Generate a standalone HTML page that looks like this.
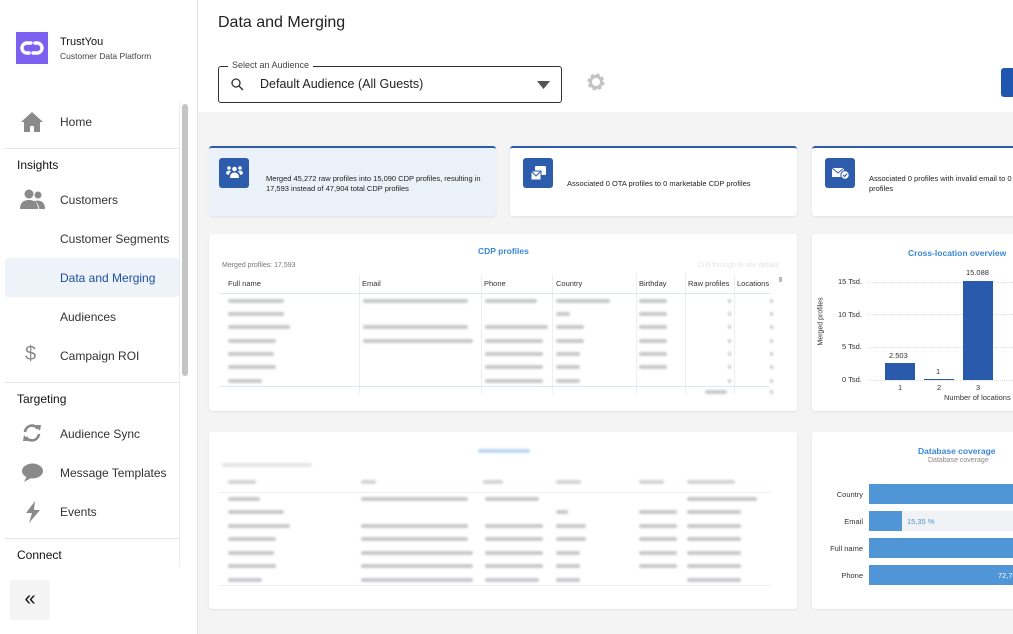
<!DOCTYPE html>
<html><head><meta charset="utf-8"><style>
*{box-sizing:border-box;margin:0;padding:0}
body{width:1013px;height:634px;overflow:hidden;font-family:"Liberation Sans",Arial,sans-serif;background:#f4f4f4;position:relative;color:#222}
.abs{position:absolute}
#side{left:0;top:0;width:198px;height:634px;background:#fff;border-right:1px solid #e4e4e4}
.nav{position:absolute;left:60px;font-size:12px;color:#333}
.sec{position:absolute;left:17px;font-size:12px;color:#111}
.hr{position:absolute;left:5px;width:174px;height:1px;background:#e6e6e6}
.card{position:absolute;background:#fff;border-radius:3px;box-shadow:0 1px 2px rgba(0,0,0,.08)}
.kpi{border-top:2px solid #2c5cab}
.ic{position:absolute;left:10px;top:10px;width:30px;height:30px;background:#2c5cab;border-radius:3px}
.kt{position:absolute;font-size:7.5px;color:#222;line-height:10px}
.b{position:absolute;height:4px;background:#c9c9c9;filter:blur(1px);border-radius:2px}
.th{position:absolute;font-size:7.5px;color:#333}
.vl{position:absolute;width:1px;background:#eee}
.ax{position:absolute;font-size:7.5px;color:#333}
</style></head><body>
<div class="abs" style="left:198px;top:0;width:815px;height:112px;background:#fff"></div>
<div id="side" class="abs">
 <div class="abs" style="left:16px;top:32px;width:32px;height:32px;background:#7b61f0"></div>
 <svg class="abs" style="left:16px;top:32px" width="32" height="32" viewBox="0 0 32 32"><path d="M15 11 H11 a5 5 0 0 0 0 10 H13 M17 21 H21 a5 5 0 0 0 0 -10 H19" fill="none" stroke="#fff" stroke-width="3.4" stroke-linecap="round"/><path d="M12 16 H20" stroke="#fff" stroke-width="0" /></svg>
 <div class="abs" style="left:60px;top:36px;font-size:11px;color:#111">TrustYou</div>
 <div class="abs" style="left:60px;top:51px;font-size:8.5px;color:#444">Customer Data Platform</div>
 <svg class="abs" style="left:21px;top:111px" width="22" height="21" viewBox="0 0 22 21"><path d="M11 1 L22 11 H19 V21 H13 V15 H9 V21 H3 V11 H0 Z" fill="#8a8a8a"/></svg>
 <div class="nav" style="top:115px">Home</div>
 <div class="hr" style="top:148px"></div>
 <div class="sec" style="top:158px">Insights</div>
 <svg class="abs" style="left:20px;top:189px" width="26" height="20" viewBox="0 0 26 20"><circle cx="9" cy="5" r="4.5" fill="#8a8a8a"/><circle cx="18" cy="6" r="3.5" fill="#8a8a8a"/><path d="M0 20 Q0 11 9 11 Q18 11 18 20Z M14 12 Q25 10 25 20 H19 Q19 14 14 12Z" fill="#8a8a8a"/></svg>
 <div class="nav" style="top:193px">Customers</div>
 <div class="nav" style="top:232px">Customer Segments</div>
 <div class="abs" style="left:5px;top:258px;width:174px;height:39px;background:#eef3fa;border-radius:3px"></div>
 <div class="nav" style="top:271px;color:#1f4fa0">Data and Merging</div>
 <div class="nav" style="top:310px">Audiences</div>
 <div class="abs" style="left:25px;top:343px;font-size:20px;color:#8a8a8a">$</div>
 <div class="nav" style="top:349px">Campaign ROI</div>
 <div class="hr" style="top:382px"></div>
 <div class="sec" style="top:392px">Targeting</div>
 <svg class="abs" style="left:22px;top:423px" width="20" height="20" viewBox="0 0 20 20"><path d="M3 9 A7 7 0 0 1 16 6 M17 11 A7 7 0 0 1 4 14" fill="none" stroke="#8a8a8a" stroke-width="2.6"/><path d="M13 2 L19 2 L18 8Z M7 18 L1 18 L2 12Z" fill="#8a8a8a"/></svg>
 <div class="nav" style="top:427px">Audience Sync</div>
 <svg class="abs" style="left:22px;top:463px" width="21" height="19" viewBox="0 0 21 19"><ellipse cx="10.5" cy="8" rx="10.5" ry="7.5" fill="#8a8a8a"/><path d="M2 19 L5 13 L9 15Z" fill="#8a8a8a"/></svg>
 <div class="nav" style="top:466px">Message Templates</div>
 <svg class="abs" style="left:25px;top:501px" width="16" height="22" viewBox="0 0 16 22"><path d="M10 0 L1 12 H7 L4 22 L15 9 H9 Z" fill="#8a8a8a"/></svg>
 <div class="nav" style="top:505px">Events</div>
 <div class="hr" style="top:538px"></div>
 <div class="sec" style="top:548px">Connect</div>
 <div class="abs" style="left:179px;top:102px;width:12px;height:465px;border-left:1px solid #ececec"></div>
 <div class="abs" style="left:182px;top:104px;width:6px;height:272px;background:#c4c4c4;border-radius:3px"></div>
 <div class="abs" style="left:10px;top:580px;width:40px;height:40px;background:#f4f4f4;border-radius:3px;font-size:20px;text-align:center;line-height:38px;color:#111">«</div>
</div>

<div class="abs" style="left:218px;top:14px;font-size:16px;color:#222">Data and Merging</div>
<div class="abs" style="left:218px;top:66px;width:344px;height:37px;border:1px solid #333;border-radius:3px"></div>
<div class="abs" style="left:228px;top:60px;padding:0 4px;background:#fff;font-size:9px;color:#444">Select an Audience</div>
<svg class="abs" style="left:231px;top:78px" width="13" height="13" viewBox="0 0 13 13"><circle cx="5" cy="5" r="4" fill="none" stroke="#333" stroke-width="1.3"/><path d="M8 8 L12 12" stroke="#333" stroke-width="1.4"/></svg>
<div class="abs" style="left:260px;top:77px;font-size:12.5px;color:#222">Default Audience (All Guests)</div>
<svg class="abs" style="left:537px;top:81px" width="13" height="8"><path d="M0 0 H13 L6.5 8Z" fill="#555"/></svg>
<svg class="abs" style="left:586px;top:72px" width="20" height="20" viewBox="0 0 20 20"><circle cx="10" cy="10" r="6.5" fill="none" stroke="#c4c4c4" stroke-width="4" stroke-dasharray="3 2.1"/><circle cx="10" cy="10" r="5.5" fill="none" stroke="#c4c4c4" stroke-width="3"/></svg>
<div class="abs" style="left:1001px;top:68px;width:14px;height:29px;background:#1f56b0;border-radius:3px"></div>

<div class="card kpi" style="left:209px;top:146px;width:287px;height:70px;background:#eaf1f9">
 <div class="ic"></div>
 <svg class="abs" style="left:17px;top:17px" width="17" height="14" viewBox="0 0 17 14"><circle cx="8.5" cy="4" r="2.3" fill="#fff"/><circle cx="3" cy="3" r="1.8" fill="#fff"/><circle cx="14" cy="3" r="1.8" fill="#fff"/><path d="M4 13 Q4 7.5 8.5 7.5 Q13 7.5 13 13Z M0 9 Q0 5.5 3 5.5 Q4.5 5.5 5 6.5 Q3 8 3 10Z M17 9 Q17 5.5 14 5.5 Q12.5 5.5 12 6.5 Q14 8 14 10Z" fill="#fff"/></svg>
 <div class="kt" style="left:57px;top:26px;width:220px">Merged 45,272 raw profiles into 15,090 CDP profiles, resulting in 17,593 instead of 47,904 total CDP profiles</div>
</div>
<div class="card kpi" style="left:510px;top:146px;width:287px;height:70px">
 <div class="ic" style="left:13px"></div>
 <svg class="abs" style="left:20px;top:17px" width="17" height="16" viewBox="0 0 17 16"><rect x="5" y="1" width="11" height="9" fill="#fff" rx="1"/><rect x="1" y="6" width="10" height="9" fill="#fff" stroke="#2c5cab" stroke-width="1"/><path d="M1 6 L6 11 L11 6" fill="none" stroke="#2c5cab"/></svg>
 <div class="kt" style="left:57px;top:31px">Associated 0 OTA profiles to 0 marketable CDP profiles</div>
</div>
<div class="card kpi" style="left:812px;top:146px;width:210px;height:70px">
 <div class="ic" style="left:13px"></div>
 <svg class="abs" style="left:20px;top:19px" width="18" height="13" viewBox="0 0 18 13"><rect x="0" y="1" width="12" height="9" fill="#fff"/><path d="M0 1 L6 6 L12 1" fill="none" stroke="#2c5cab"/><circle cx="13" cy="8" r="4.2" fill="#fff" stroke="#2c5cab"/><path d="M11 8 L12.5 9.5 L15 6.8" fill="none" stroke="#2c5cab" stroke-width="1.2"/></svg>
 <div class="kt" style="left:57px;top:26px;width:160px">Associated 0 profiles with invalid email to 0 profiles</div>
</div>

<!-- CDP profiles table -->
<div class="card" style="left:209px;top:234px;width:588px;height:177px"></div>
<div class="abs" style="left:478px;top:246px;font-size:8.5px;font-weight:bold;color:#3a87d6">CDP profiles</div>
<div class="abs" style="left:222px;top:262px;font-size:7px;color:#777">Merged profiles: 17,593</div>
<div class="abs" style="left:698px;top:262px;font-size:7px;color:#e4e4e4">Drill through to see details</div>
<div class="th" style="left:228px;top:279px">Full name</div><div class="th" style="left:362px;top:279px">Email</div><div class="th" style="left:484px;top:279px">Phone</div><div class="th" style="left:556px;top:279px">Country</div><div class="th" style="left:639px;top:279px">Birthday</div><div class="th" style="left:688px;top:279px">Raw profiles</div><div class="th" style="left:737px;top:279px">Locations</div>
<div class="abs" style="left:779px;top:277px;width:3px;height:5px;background:#bbb"></div>
<div class="vl" style="left:359px;top:274px;height:120px"></div><div class="vl" style="left:481px;top:274px;height:120px"></div><div class="vl" style="left:552px;top:274px;height:120px"></div><div class="vl" style="left:636px;top:274px;height:120px"></div><div class="vl" style="left:685px;top:274px;height:120px"></div><div class="vl" style="left:734px;top:274px;height:120px"></div>
<div class="abs" style="left:220px;top:293px;width:550px;height:1px;background:#dbe6f5"></div>
<div class="abs" style="left:220px;top:386px;width:550px;height:1px;background:#dbe6f5"></div>
<div class="b" style="left:228px;top:299px;width:56px"></div><div class="b" style="left:363px;top:299px;width:105px"></div><div class="b" style="left:485px;top:299px;width:52px"></div><div class="b" style="left:556px;top:299px;width:54px"></div><div class="b" style="left:639px;top:299px;width:28px"></div><div class="b" style="left:728px;top:299px;width:3px"></div><div class="b" style="left:770px;top:299px;width:3px"></div>
<div class="b" style="left:228px;top:312px;width:56px"></div><div class="b" style="left:556px;top:312px;width:14px"></div><div class="b" style="left:639px;top:312px;width:28px"></div><div class="b" style="left:728px;top:312px;width:3px"></div><div class="b" style="left:770px;top:312px;width:3px"></div>
<div class="b" style="left:228px;top:325px;width:62px"></div><div class="b" style="left:363px;top:325px;width:105px"></div><div class="b" style="left:485px;top:325px;width:63px"></div><div class="b" style="left:556px;top:325px;width:28px"></div><div class="b" style="left:639px;top:325px;width:28px"></div><div class="b" style="left:728px;top:325px;width:3px"></div><div class="b" style="left:770px;top:325px;width:3px"></div>
<div class="b" style="left:228px;top:339px;width:48px"></div><div class="b" style="left:363px;top:339px;width:110px"></div><div class="b" style="left:485px;top:339px;width:58px"></div><div class="b" style="left:556px;top:339px;width:28px"></div><div class="b" style="left:639px;top:339px;width:28px"></div><div class="b" style="left:728px;top:339px;width:3px"></div><div class="b" style="left:770px;top:339px;width:3px"></div>
<div class="b" style="left:228px;top:352px;width:46px"></div><div class="b" style="left:485px;top:352px;width:58px"></div><div class="b" style="left:556px;top:352px;width:24px"></div><div class="b" style="left:639px;top:352px;width:28px"></div><div class="b" style="left:728px;top:352px;width:3px"></div><div class="b" style="left:770px;top:352px;width:3px"></div>
<div class="b" style="left:228px;top:365px;width:48px"></div><div class="b" style="left:485px;top:365px;width:58px"></div><div class="b" style="left:556px;top:365px;width:24px"></div><div class="b" style="left:639px;top:365px;width:28px"></div><div class="b" style="left:728px;top:365px;width:3px"></div><div class="b" style="left:770px;top:365px;width:3px"></div>
<div class="b" style="left:228px;top:379px;width:34px"></div><div class="b" style="left:485px;top:379px;width:58px"></div><div class="b" style="left:556px;top:379px;width:24px"></div><div class="b" style="left:728px;top:379px;width:3px"></div><div class="b" style="left:770px;top:379px;width:3px"></div>
<div class="b" style="left:705px;top:390px;width:22px"></div><div class="b" style="left:770px;top:390px;width:3px"></div>

<!-- Cross location -->
<div class="card" style="left:812px;top:234px;width:210px;height:177px"></div>
<div class="abs" style="left:908px;top:248px;font-size:8.5px;font-weight:bold;color:#3a87d6">Cross-location overview</div>
<div class="ax" style="left:838px;top:277px">15 Tsd.</div><div class="ax" style="left:838px;top:310px">10 Tsd.</div><div class="ax" style="left:842px;top:342px">5 Tsd.</div><div class="ax" style="left:842px;top:375px">0 Tsd.</div>
<div class="abs" style="left:868px;top:282px;width:145px;border-top:1px dotted #ddd"></div><div class="abs" style="left:868px;top:314px;width:145px;border-top:1px dotted #ddd"></div><div class="abs" style="left:868px;top:347px;width:145px;border-top:1px dotted #ddd"></div><div class="abs" style="left:868px;top:380px;width:145px;border-top:1px dotted #ddd"></div>
<div class="ax" style="left:797px;top:318px;transform:rotate(-90deg);white-space:nowrap;font-size:7px">Merged profiles</div>
<div class="abs" style="left:885px;top:363px;width:30px;height:17px;background:#2a5aab"></div>
<div class="abs" style="left:924px;top:379px;width:30px;height:1px;background:#2a5aab"></div>
<div class="abs" style="left:963px;top:281px;width:30px;height:99px;background:#2a5aab"></div>
<div class="ax" style="left:889px;top:351px">2.503</div><div class="ax" style="left:936px;top:367px">1</div><div class="ax" style="left:966px;top:268px">15.088</div>
<div class="ax" style="left:898px;top:383px">1</div><div class="ax" style="left:937px;top:383px">2</div><div class="ax" style="left:976px;top:383px">3</div>
<div class="ax" style="left:944px;top:393px">Number of locations</div>

<!-- Raw profiles -->
<div class="card" style="left:209px;top:432px;width:588px;height:177px"></div>
<div class="b" style="left:478px;top:449px;width:52px;background:#bcd6f2"></div>
<div class="b" style="left:222px;top:463px;width:90px;background:#e6e6e6"></div>
<div class="b" style="left:228px;top:480px;width:28px;background:#d4d4d4"></div><div class="b" style="left:361px;top:480px;width:15px;background:#d4d4d4"></div><div class="b" style="left:483px;top:480px;width:20px;background:#d4d4d4"></div><div class="b" style="left:556px;top:480px;width:25px;background:#d4d4d4"></div><div class="b" style="left:639px;top:480px;width:25px;background:#d4d4d4"></div><div class="b" style="left:687px;top:480px;width:48px;background:#d4d4d4"></div>
<div class="abs" style="left:220px;top:492px;width:550px;height:1px;background:#e6eef8"></div>
<div class="abs" style="left:220px;top:585px;width:550px;height:1px;background:#e6eef8"></div>
<div class="b" style="left:228px;top:497px;width:32px"></div><div class="b" style="left:361px;top:497px;width:107px"></div><div class="b" style="left:485px;top:497px;width:54px"></div><div class="b" style="left:687px;top:497px;width:70px"></div>
<div class="b" style="left:228px;top:510px;width:56px"></div><div class="b" style="left:556px;top:510px;width:12px"></div><div class="b" style="left:639px;top:510px;width:38px"></div><div class="b" style="left:687px;top:510px;width:54px"></div>
<div class="b" style="left:228px;top:524px;width:62px"></div><div class="b" style="left:361px;top:524px;width:107px"></div><div class="b" style="left:485px;top:524px;width:58px"></div><div class="b" style="left:556px;top:524px;width:30px"></div><div class="b" style="left:639px;top:524px;width:38px"></div><div class="b" style="left:687px;top:524px;width:54px"></div>
<div class="b" style="left:228px;top:537px;width:48px"></div><div class="b" style="left:361px;top:537px;width:107px"></div><div class="b" style="left:485px;top:537px;width:58px"></div><div class="b" style="left:556px;top:537px;width:30px"></div><div class="b" style="left:639px;top:537px;width:38px"></div><div class="b" style="left:687px;top:537px;width:54px"></div>
<div class="b" style="left:228px;top:551px;width:46px"></div><div class="b" style="left:361px;top:551px;width:112px"></div><div class="b" style="left:485px;top:551px;width:58px"></div><div class="b" style="left:556px;top:551px;width:24px"></div><div class="b" style="left:639px;top:551px;width:38px"></div><div class="b" style="left:687px;top:551px;width:54px"></div>
<div class="b" style="left:228px;top:564px;width:48px"></div><div class="b" style="left:361px;top:564px;width:112px"></div><div class="b" style="left:485px;top:564px;width:58px"></div><div class="b" style="left:556px;top:564px;width:24px"></div><div class="b" style="left:639px;top:564px;width:38px"></div><div class="b" style="left:687px;top:564px;width:54px"></div>
<div class="b" style="left:228px;top:578px;width:34px"></div><div class="b" style="left:361px;top:578px;width:112px"></div><div class="b" style="left:485px;top:578px;width:54px"></div><div class="b" style="left:556px;top:578px;width:24px"></div><div class="b" style="left:687px;top:578px;width:54px"></div>

<!-- Database coverage -->
<div class="card" style="left:812px;top:432px;width:210px;height:177px"></div>
<div class="abs" style="left:918px;top:446px;font-size:8.5px;font-weight:bold;color:#3a87d6">Database coverage</div>
<div class="abs" style="left:928px;top:457px;font-size:7px;color:#888">Database coverage</div>
<div class="ax" style="left:800px;top:490px;width:63px;text-align:right">Country</div>
<div class="ax" style="left:800px;top:517px;width:63px;text-align:right">Email</div>
<div class="ax" style="left:800px;top:544px;width:63px;text-align:right">Full name</div>
<div class="ax" style="left:800px;top:571px;width:63px;text-align:right">Phone</div>
<div class="abs" style="left:869px;top:484px;width:144px;height:20px;background:#5096d6"></div>
<div class="abs" style="left:869px;top:511px;width:144px;height:20px;background:#f0f2f5"></div>
<div class="abs" style="left:869px;top:511px;width:33px;height:20px;background:#5096d6"></div>
<div class="ax" style="left:907px;top:517px;color:#5096d6">15,35 %</div>
<div class="abs" style="left:869px;top:538px;width:144px;height:20px;background:#5096d6"></div>
<div class="abs" style="left:869px;top:565px;width:144px;height:20px;background:#5096d6"></div>
<div class="ax" style="left:998px;top:571px;color:#fff">72,74</div>
</body></html>
